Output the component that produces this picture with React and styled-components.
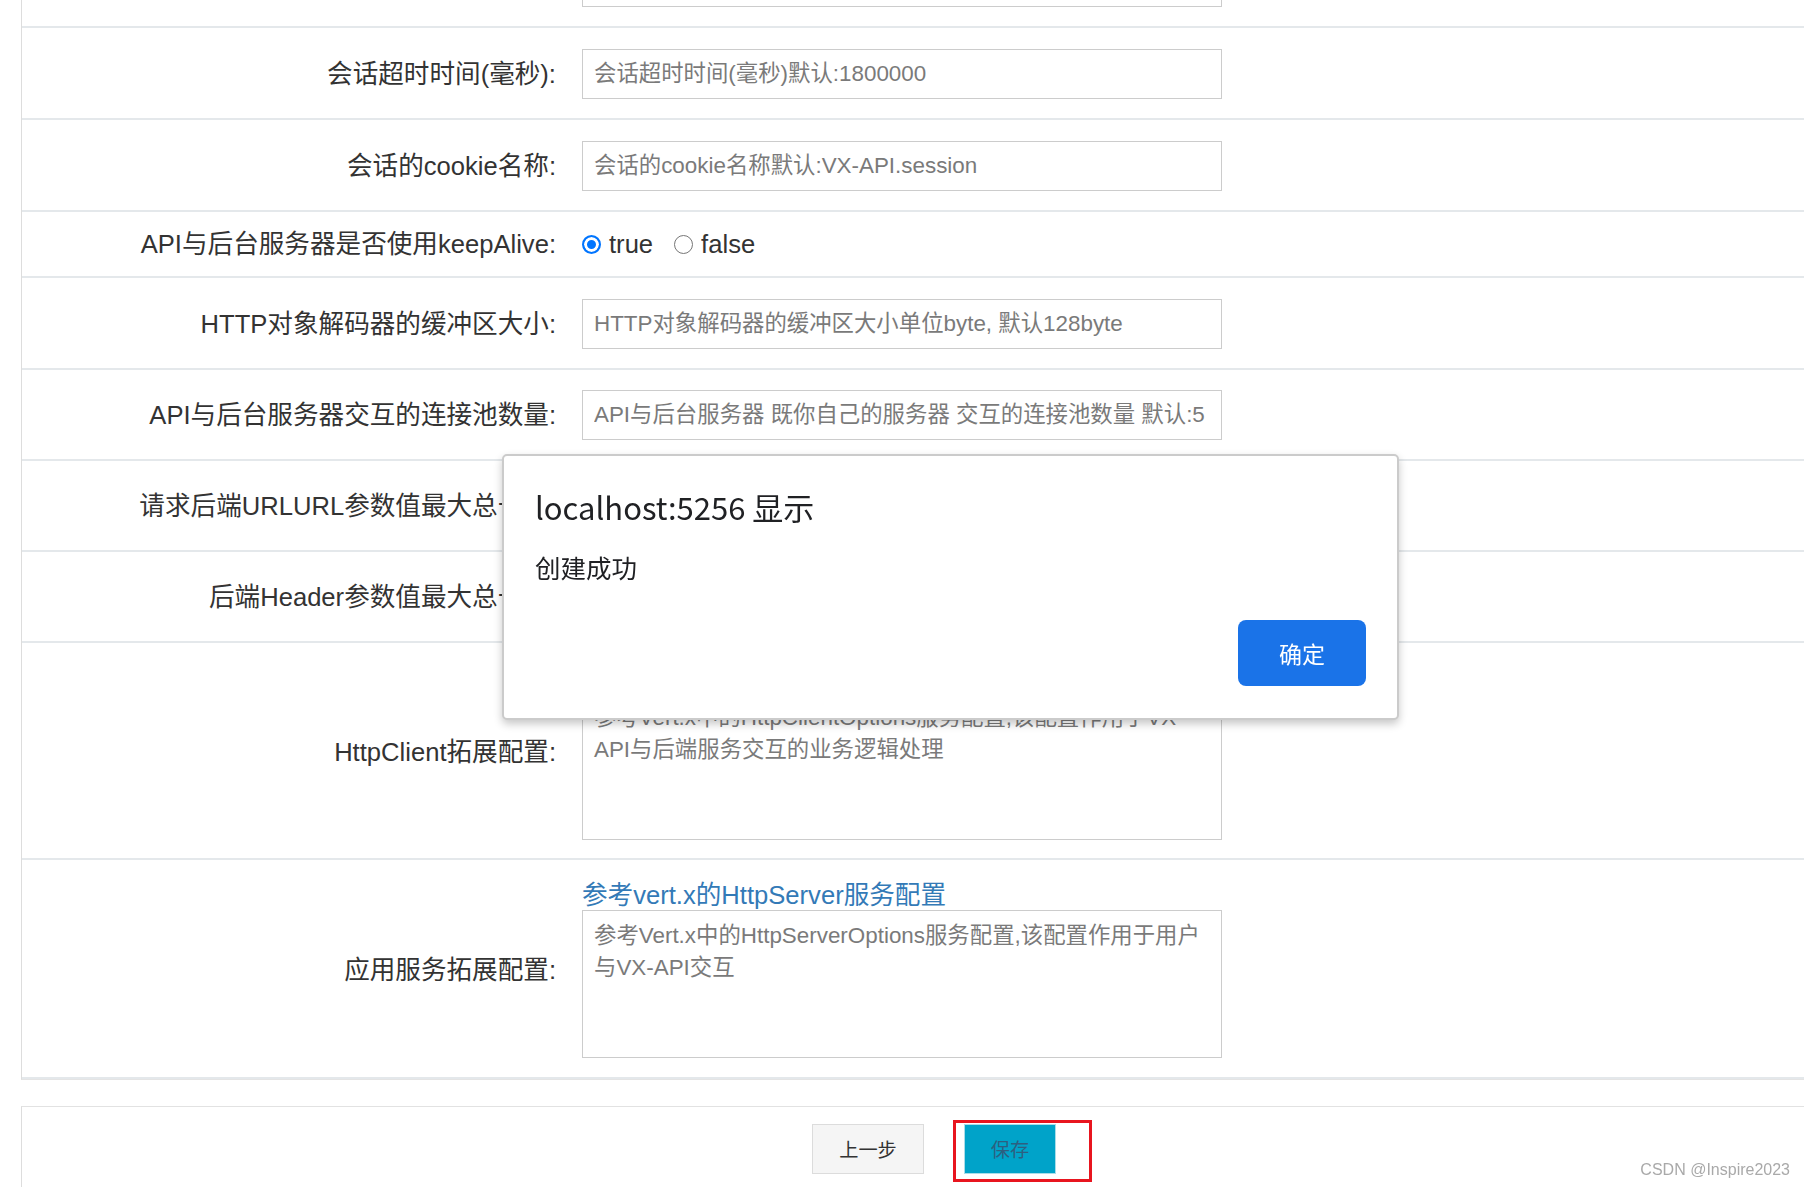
import React from "react";
import styled, { createGlobalStyle, css } from "styled-components";

const GlobalStyle = createGlobalStyle`
  html, body {
    margin: 0;
    padding: 0;
    background: #ffffff;
    overflow: hidden;
  }
  body {
    font-family: "Liberation Sans", "Noto Sans CJK SC", sans-serif;
    color: #333333;
  }
  * { box-sizing: border-box; }
`;

const Page = styled.div`
  padding-left: 21px;
  margin-top: -63px;
`;

const FormPanel = styled.div`
  border-left: 1px solid #dddddd;
  border-bottom: 1px solid #e4e4e4;
`;

const FormRow = styled.div`
  display: grid;
  grid-template-columns: 534px 640px;
  column-gap: 26px;
  align-items: center;
  padding: ${(p) => p.$pad || "20px 0 19px"};
  border-bottom: 2px solid #e4e8eb;
`;

const Label = styled.label`
  text-align: right;
  font-size: 25.6px;
  line-height: 28px;
  color: #333333;
  white-space: nowrap;
`;

const fieldText = css`
  font-family: "Liberation Sans", "Noto Sans CJK SC", sans-serif;
  font-size: 22.4px;
  color: #555555;
  border: 1px solid #cccccc;
  background: #ffffff;
  outline: none;
  &::placeholder {
    color: #7a7a7a;
    opacity: 1;
  }
`;

const TextInput = styled.input`
  ${fieldText};
  width: 640px;
  height: 50px;
  padding: 0 11px;
`;

const TextArea = styled.textarea`
  ${fieldText};
  width: 640px;
  height: 148px;
  padding: 9px 11px;
  line-height: 32px;
  resize: none;
  display: block;
`;

const FieldStack = styled.div`
  display: flex;
  flex-direction: column;
`;

const DocLink = styled.a`
  font-size: 25.6px;
  line-height: 29px;
  color: #337ab7;
  text-decoration: none;
`;

const RadioGroup = styled.div`
  display: flex;
  align-items: center;
  gap: 21px;
  font-size: 25.6px;
  line-height: 28px;
`;

const RadioOption = styled.label`
  display: flex;
  align-items: center;
  gap: 8px;
  color: #333333;
`;

const RadioDot = styled.span`
  width: 19px;
  height: 19px;
  border-radius: 50%;
  display: inline-block;
  ${(p) =>
    p.$checked
      ? css`
          border: 2px solid #0075ff;
          background: #0075ff;
          box-shadow: inset 0 0 0 3px #ffffff;
        `
      : css`
          border: 1.5px solid #767676;
          background: #ffffff;
        `}
`;

const ActionPanel = styled.div`
  margin-top: 26px;
  border-left: 1px solid #dddddd;
  border-top: 1px solid #e2e2e2;
  padding: 13px 0 0 790px;
  height: 110px;
  display: flex;
  align-items: flex-start;
  gap: 29px;
`;

const Button = styled.button`
  height: 50px;
  font-family: "Liberation Sans", "Noto Sans CJK SC", sans-serif;
  font-size: 19.2px;
  cursor: pointer;
  ${(p) =>
    p.$primary
      ? css`
          width: 92px;
          background: #00a3c9;
          border: 1px solid #a9dde9;
          color: #2d5f80;
        `
      : css`
          width: 112px;
          margin-top: 4px;
          background: #f5f5f5;
          border: 1px solid #dcdcdc;
          color: #333333;
        `}
`;

const Highlight = styled.span`
  display: inline-flex;
  border: 3px solid #e8151f;
  padding: 1px 33px 5px 8px;
`;

const Watermark = styled.div`
  position: fixed;
  right: 14px;
  bottom: 8px;
  font-family: "Liberation Sans", sans-serif;
  font-size: 16px;
  color: #a9a9a9;
  text-shadow: 0 0 1px #ffffff;
`;

const Dialog = styled.div`
  position: fixed;
  left: 502px;
  top: 454px;
  width: 897px;
  height: 266px;
  background: #ffffff;
  border: 2px solid #cbcbcb;
  border-radius: 5px;
  box-shadow: 0 4px 8px rgba(0, 0, 0, 0.22);
  padding: 31px 31px 32px 31px;
  display: flex;
  flex-direction: column;
  font-family: "Noto Sans CJK SC", "Noto Sans", sans-serif;
`;

const DialogTitle = styled.div`
  font-size: 31px;
  line-height: 40px;
  color: #202124;
`;

const DialogMessage = styled.div`
  margin-top: 22px;
  font-size: 25.5px;
  line-height: 36px;
  color: #202124;
`;

const DialogFooter = styled.div`
  margin-top: auto;
  display: flex;
  justify-content: flex-end;
`;

const DialogButton = styled.button`
  width: 128px;
  height: 66px;
  border: none;
  border-radius: 8px;
  background: #1a73e8;
  color: #ffffff;
  font-family: "Noto Sans CJK SC", sans-serif;
  font-size: 23px;
  font-weight: 400;
`;

const inputRows = [
  { label: "", placeholder: "会话的最大存活时间(毫秒)默认:1800000" },
  { label: "会话超时时间(毫秒):", placeholder: "会话超时时间(毫秒)默认:1800000", pad: "21px 0 19px" },
  { label: "会话的cookie名称:", placeholder: "会话的cookie名称默认:VX-API.session", pad: "21px 0 19px" },
];

const inputRows2 = [
  { label: "HTTP对象解码器的缓冲区大小:", placeholder: "HTTP对象解码器的缓冲区大小单位byte, 默认128byte", pad: "21px 0 19px" },
  { label: "API与后台服务器交互的连接池数量:", placeholder: "API与后台服务器 既你自己的服务器 交互的连接池数量 默认:5" },
  { label: "请求后端URLURL参数值最大总长度:", placeholder: "请求后端URL参数值最大总长度 默认:4096" },
  { label: "后端Header参数值最大总长度:", placeholder: "后端Header参数值最大总长度 默认:8192" },
];

const areaRows = [
  {
    label: "HttpClient拓展配置:",
    link: "参考vert.x的HttpClient服务配置",
    placeholder:
      "参考Vert.x中的HttpClientOptions服务配置,该配置作用于VX-API与后端服务交互的业务逻辑处理",
    pad: "20px 0 18px",
  },
  {
    label: "应用服务拓展配置:",
    link: "参考vert.x的HttpServer服务配置",
    placeholder: "参考Vert.x中的HttpServerOptions服务配置,该配置作用于用户与VX-API交互",
    pad: "21px 0 19px",
  },
];

export default function App() {
  return (
    <>
      <GlobalStyle />
      <Page>
        <FormPanel>
          {inputRows.map((r) => (
            <FormRow key={r.placeholder} $pad={r.pad}>
              <Label>{r.label}</Label>
              <TextInput placeholder={r.placeholder} />
            </FormRow>
          ))}
          <FormRow $pad="18px 0 18px">
            <Label>API与后台服务器是否使用keepAlive:</Label>
            <RadioGroup>
              <RadioOption>
                <RadioDot $checked />
                true
              </RadioOption>
              <RadioOption>
                <RadioDot />
                false
              </RadioOption>
            </RadioGroup>
          </FormRow>
          {inputRows2.map((r) => (
            <FormRow key={r.label} $pad={r.pad}>
              <Label>{r.label}</Label>
              <TextInput placeholder={r.placeholder} />
            </FormRow>
          ))}
          {areaRows.map((r) => (
            <FormRow key={r.label} $pad={r.pad}>
              <Label>{r.label}</Label>
              <FieldStack>
                <DocLink href="#">{r.link}</DocLink>
                <TextArea placeholder={r.placeholder} />
              </FieldStack>
            </FormRow>
          ))}
        </FormPanel>
        <ActionPanel>
          <Button>上一步</Button>
          <Highlight>
            <Button $primary>保存</Button>
          </Highlight>
        </ActionPanel>
      </Page>
      <Dialog>
        <DialogTitle>localhost:5256 显示</DialogTitle>
        <DialogMessage>创建成功</DialogMessage>
        <DialogFooter>
          <DialogButton>确定</DialogButton>
        </DialogFooter>
      </Dialog>
      <Watermark>CSDN @Inspire2023</Watermark>
    </>
  );
}
